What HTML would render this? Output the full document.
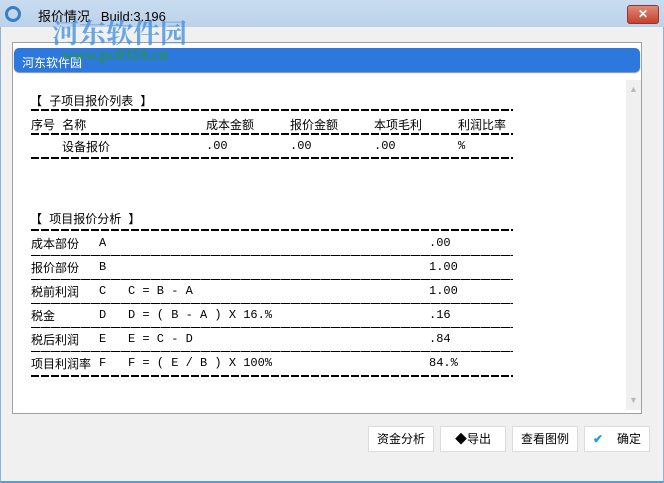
<!DOCTYPE html><html><head><meta charset="utf-8"><style>
body{margin:0;width:664px;height:483px;overflow:hidden;background:#f0f0f0;font-family:"Liberation Sans","Noto Sans CJK SC",sans-serif;font-size:12px;position:relative}
.a{position:absolute}
.tb{left:0;top:0;width:664px;height:27px;background:linear-gradient(#c9dcf0,#bcd2ea)}
.dash{position:absolute;left:31px;width:482px;height:2px;background:repeating-linear-gradient(90deg,#000 0 8px,transparent 8px 10px)}
.thin{position:absolute;left:31px;width:482px;height:1px;background:repeating-linear-gradient(90deg,#000 0 9px,#777 9px 10px)}
.t{position:absolute;font-size:12px;color:#000;white-space:pre;font-family:"Liberation Mono","Noto Sans CJK SC",monospace}
.btn{position:absolute;top:426px;width:64px;height:24px;background:#fff;border:1px solid #dcdcdc;text-align:center;line-height:24px;font-size:12px}
</style></head><body>
<div class="a tb"></div>
<div class="a" style="left:0;top:27px;width:664px;height:456px;background:#f0f0f0;border-left:1px solid #8fb2d8;border-right:1px solid #8fb2d8;box-sizing:border-box;border-bottom:2px solid #5a9ad6"></div>
<div class="a" style="left:5px;top:6px;width:10px;height:10px;border:3px solid #3a7fc4;border-radius:50%"></div>
<div class="a" style="left:38px;top:6px;font-size:13px">报价情况&nbsp;&nbsp;&nbsp;Build:3.196</div>
<div class="a" style="left:627px;top:5px;width:30px;height:17px;background:linear-gradient(#e08a78,#c5412d);border:1px solid #8a3a2e;border-radius:3px;color:#fff;text-align:center;font-weight:bold;line-height:17px">✕</div>
<div class="a" style="left:12px;top:42px;width:628px;height:370px;background:#fff;border:1px solid #a0a0a0"></div>
<div class="a" style="left:14px;top:48px;width:626px;height:24px;background:#2d78dc;border-radius:5px;box-shadow:0 1px 1px #888"></div>
<div class="a" style="left:22px;top:54px;color:#fff;font-size:12px">河东软件园</div>
<div class="a" style="left:52px;top:12px;font-size:27px;font-weight:bold;color:rgba(60,140,220,.75);font-family:'Noto Serif CJK SC',serif">河东软件园</div>
<div class="a" style="left:62px;top:47px;font-size:16px;font-weight:bold;color:rgba(40,150,60,.8);font-family:'Liberation Serif',serif">www.pc0359.cn</div>
<div class="a" style="left:626px;top:80px;width:15px;height:330px;background:#f0f0f0"></div>
<div class="a" style="left:629px;top:84px;font-size:9px;color:#bbb">▲</div>
<div class="a" style="left:629px;top:395px;font-size:9px;color:#bbb">▼</div>

<div class="t" style="left:30px;top:92px">【 子项目报价列表 】</div>
<div class="dash" style="top:109px"></div>
<div class="t" style="left:31px;top:116px">序号 名称</div>
<div class="t" style="left:206px;top:116px">成本金额</div>
<div class="t" style="left:290px;top:116px">报价金额</div>
<div class="t" style="left:374px;top:116px">本项毛利</div>
<div class="t" style="left:458px;top:116px">利润比率</div>
<div class="dash" style="top:133px"></div>
<div class="t" style="left:62px;top:138px">设备报价</div>
<div class="t" style="left:206px;top:139px">.00</div>
<div class="t" style="left:290px;top:139px">.00</div>
<div class="t" style="left:374px;top:139px">.00</div>
<div class="t" style="left:458px;top:139px">%</div>
<div class="dash" style="top:157px"></div>

<div class="t" style="left:30px;top:210px">【 项目报价分析 】</div>
<div class="dash" style="top:229px"></div>
<div class="t" style="left:31px;top:235px">成本部份</div><div class="t" style="left:99px;top:236px">A</div><div class="t" style="left:429px;top:236px">.00</div>
<div class="thin" style="top:255px"></div>
<div class="t" style="left:31px;top:259px">报价部份</div><div class="t" style="left:99px;top:260px">B</div><div class="t" style="left:429px;top:260px">1.00</div>
<div class="thin" style="top:279px"></div>
<div class="t" style="left:31px;top:283px">税前利润</div><div class="t" style="left:99px;top:284px">C</div><div class="t" style="left:128px;top:284px">C = B - A</div><div class="t" style="left:429px;top:284px">1.00</div>
<div class="thin" style="top:303px"></div>
<div class="t" style="left:31px;top:307px">税金</div><div class="t" style="left:99px;top:308px">D</div><div class="t" style="left:128px;top:308px">D = ( B - A ) X 16.%</div><div class="t" style="left:429px;top:308px">.16</div>
<div class="thin" style="top:327px"></div>
<div class="t" style="left:31px;top:331px">税后利润</div><div class="t" style="left:99px;top:332px">E</div><div class="t" style="left:128px;top:332px">E = C - D</div><div class="t" style="left:429px;top:332px">.84</div>
<div class="thin" style="top:351px"></div>
<div class="t" style="left:31px;top:355px">项目利润率</div><div class="t" style="left:99px;top:356px">F</div><div class="t" style="left:128px;top:356px">F = ( E / B ) X 100%</div><div class="t" style="left:429px;top:356px">84.%</div>
<div class="dash" style="top:375px"></div>

<div class="btn" style="left:368px">资金分析</div>
<div class="btn" style="left:440px">◆导出</div>
<div class="btn" style="left:512px">查看图例</div>
<div class="btn" style="left:584px"><span style="color:#1e9be0;font-weight:bold;margin-right:14px">✔</span>确定</div>
</body></html>
